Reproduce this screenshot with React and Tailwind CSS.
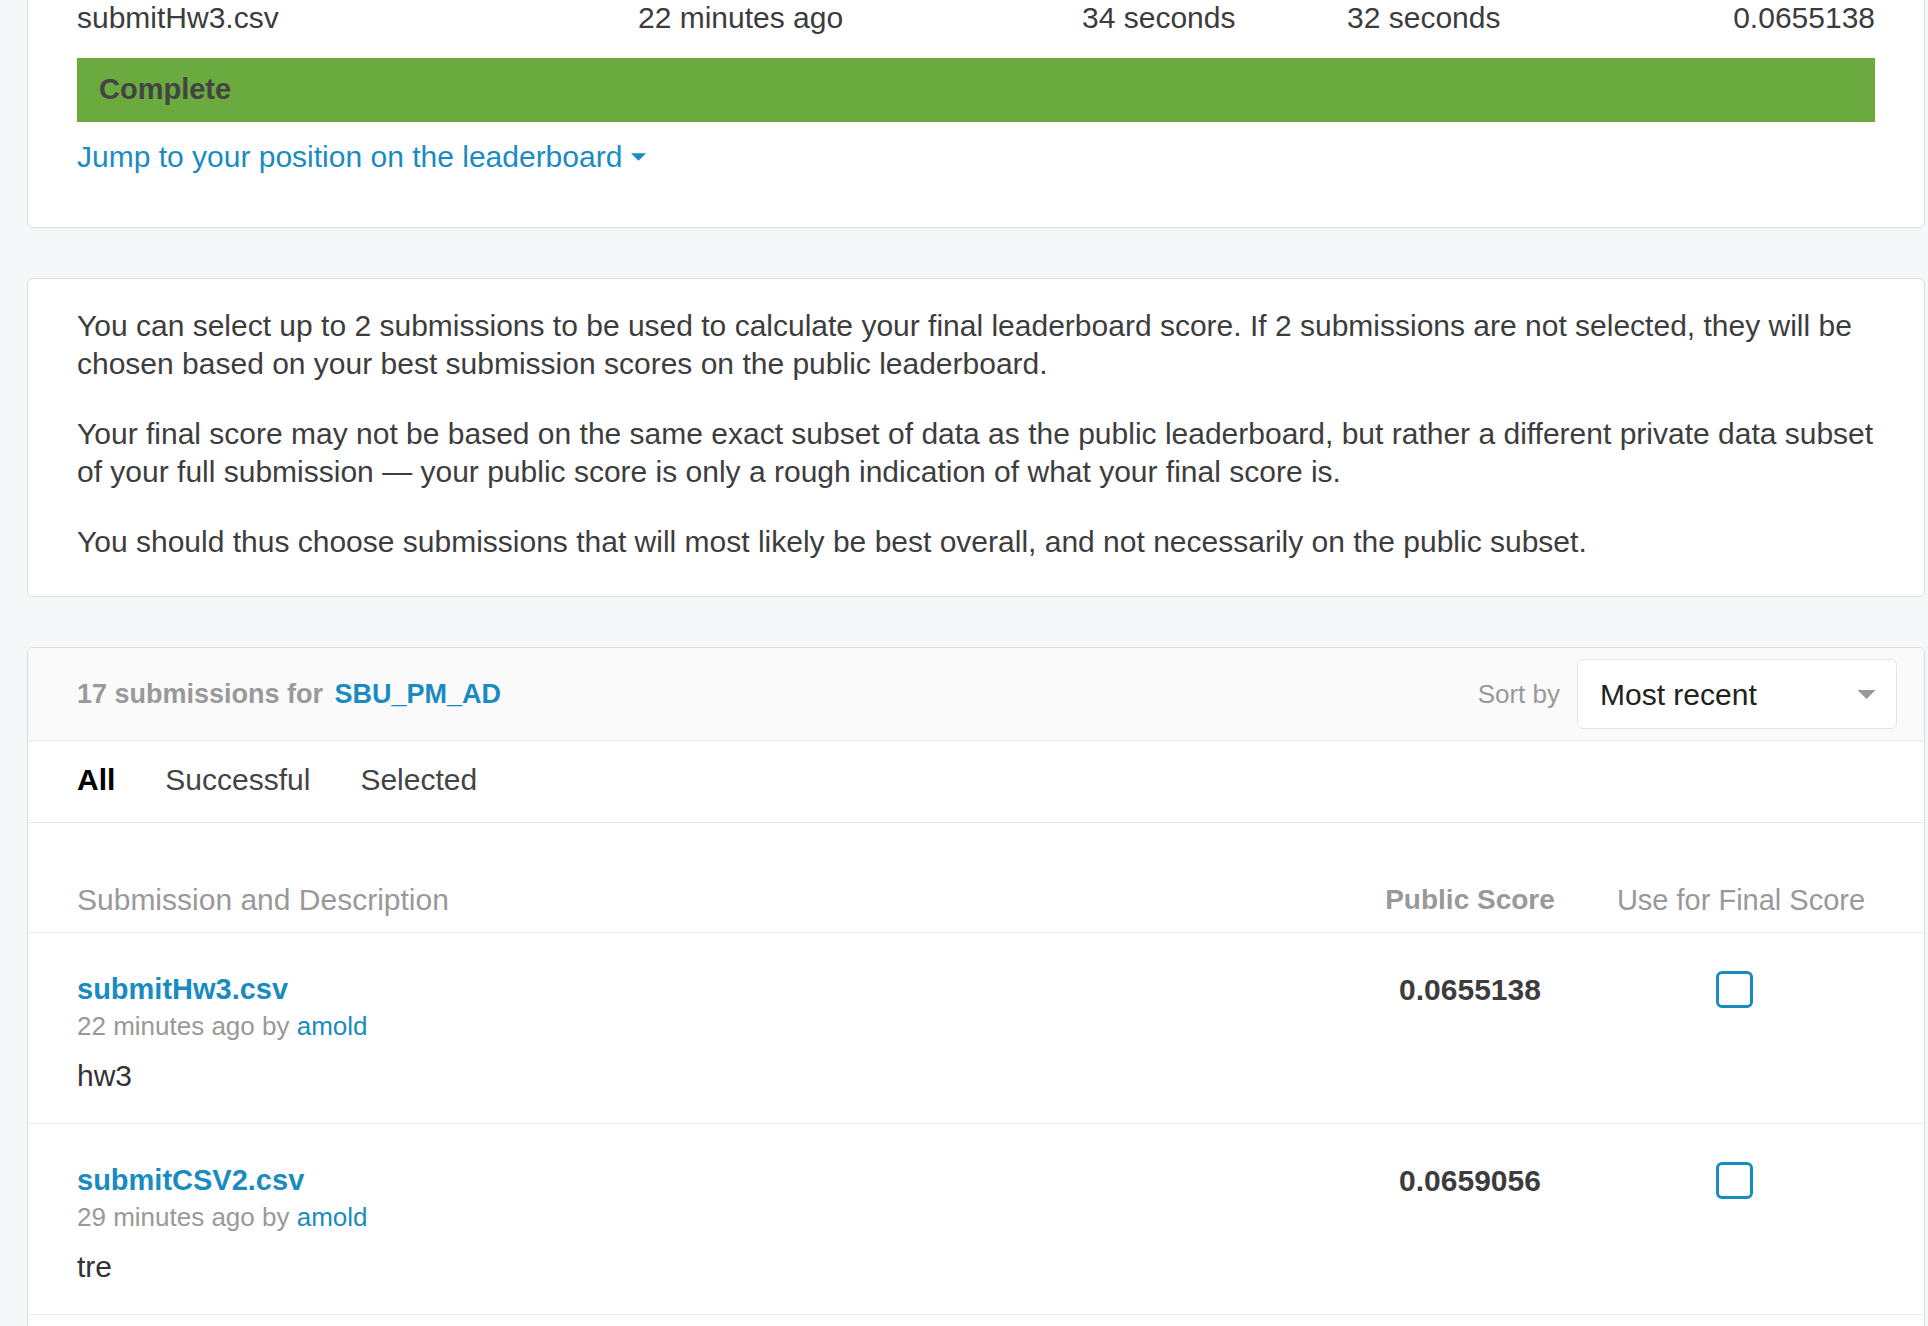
import React from "react";

const submissions = [
  { file: "submitHw3.csv", when: "22 minutes ago", by: "amold", desc: "hw3", score: "0.0655138" },
  { file: "submitCSV2.csv", when: "29 minutes ago", by: "amold", desc: "tre", score: "0.0659056" },
  { file: "submitCSV.csv", when: "41 minutes ago", by: "amold", desc: "first", score: "0.0661420" },
];

function Caret({ className }) {
  return (
    <svg viewBox="0 0 16 8" className={className}>
      <polygon points="0,0 16,0 8,8" fill="currentColor" />
    </svg>
  );
}

function SubmissionRow({ s }) {
  return (
    <div className="flex items-start border-b border-[#ebebeb] pl-[49px] pr-[33px] pt-[38px] pb-[28px]">
      <div className="flex-1">
        <div className="text-[29px] leading-[37px] font-bold text-[#1a8bc1]">{s.file}</div>
        <div className="text-[26px] leading-[37px] text-[#999]">
          {s.when} by <span className="text-[#1a8bc1]">{s.by}</span>
        </div>
        <div className="mt-[12px] text-[30px] leading-[38px] text-[#333]">{s.desc}</div>
      </div>
      <div className="w-[242px] text-center text-[30px] leading-[37px] font-bold text-[#3c3c3c]">{s.score}</div>
      <div className="w-[300px] flex justify-center pr-[14px]">
        <div className="w-[37px] h-[37px] border-[3px] border-[#1a8bc1] rounded-[6px] bg-white" />
      </div>
    </div>
  );
}

export default function App() {
  return (
    <div className="min-h-screen bg-[#f5f7f8] overflow-hidden font-['Liberation_Sans',Arial,sans-serif] text-[#3d3d3d]">
      <div className="ml-[27px] w-[1898px] -mt-[40px] flex flex-col gap-[50px] pb-[60px]">
        {/* latest submission */}
        <div className="bg-white border border-[#dcdfe1] rounded-[6px] pt-[38px] pb-[51px] px-[49px]">
          <div className="flex text-[30px] leading-[38px] text-[#3c3c3c]">
            <div className="w-[561px]">submitHw3.csv</div>
            <div className="w-[444px]">22 minutes ago</div>
            <div className="w-[265px]">34 seconds</div>
            <div className="flex-1">32 seconds</div>
            <div className="text-right">0.0655138</div>
          </div>
          <div className="mt-[21px] h-[64px] bg-[#6aaa3e] flex items-center pl-[22px] text-[29px] font-bold text-[#444]">
            Complete
          </div>
          <div className="mt-[16px] flex items-center text-[30px] leading-[38px] text-[#1a8bc1]">
            <span>Jump to your position on the leaderboard</span>
            <Caret className="ml-[9px] w-[15px] h-[8px]" />
          </div>
        </div>

        {/* explanation */}
        <div className="bg-white border border-[#dcdfe1] rounded-[6px] pt-[28px] pb-[35px] px-[49px] text-[30px] leading-[38px] flex flex-col gap-[32px]">
          <p>
            You can select up to 2 submissions to be used to calculate your final leaderboard score. If 2 submissions are not selected, they will be chosen based on your best submission scores on the public leaderboard.
          </p>
          <p>
            Your final score may not be based on the same exact subset of data as the public leaderboard, but rather a different private data subset of your full submission — your public score is only a rough indication of what your final score is.
          </p>
          <p>
            You should thus choose submissions that will most likely be best overall, and not necessarily on the public subset.
          </p>
        </div>

        {/* submissions list */}
        <div className="bg-white border border-[#dcdfe1] rounded-[6px] overflow-hidden">
          <div className="h-[93px] bg-[#fafafa] border-b border-[#e8e8e8] flex items-center pl-[49px] pr-[27px]">
            <div className="flex-1 text-[27px] font-bold text-[#999]">
              17 submissions for <span className="ml-[4px] text-[#1a8bc1]">SBU_PM_AD</span>
            </div>
            <span className="text-[26px] text-[#999] mr-[17px]">Sort by</span>
            <div className="w-[320px] h-[70px] bg-white border border-[#e6e6e6] rounded-[6px] flex items-center pl-[22px] pr-[20px]">
              <span className="flex-1 text-[30px] text-[#222]">Most recent</span>
              <Caret className="w-[19px] h-[9px] text-[#999]" />
            </div>
          </div>

          <div className="h-[82px] border-b border-[#e8e8e8] flex items-center gap-[50px] pl-[49px] pb-[4px] text-[30px]">
            <span className="font-bold text-black">All</span>
            <span className="text-[#444]">Successful</span>
            <span className="text-[#444]">Selected</span>
          </div>

          <div className="flex items-center border-b border-[#ebebeb] pl-[49px] pr-[33px] pt-[58px] pb-[13px] leading-[38px]">
            <div className="flex-1 text-[30px] text-[#999]">Submission and Description</div>
            <div className="w-[242px] text-center text-[28px] font-bold text-[#999]">Public Score</div>
            <div className="w-[300px] text-center text-[29px] text-[#999]">Use for Final Score</div>
          </div>

          {submissions.map((s) => (
            <SubmissionRow key={s.file} s={s} />
          ))}
        </div>
      </div>
    </div>
  );
}
